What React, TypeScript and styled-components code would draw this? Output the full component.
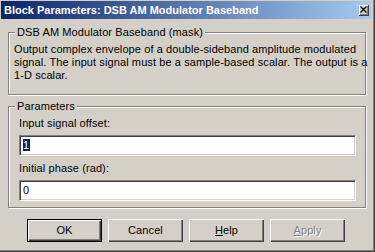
import React from "react";
import styled, { createGlobalStyle } from "styled-components";

const Global = createGlobalStyle`
  html, body { margin: 0; padding: 0; background: #d4d0c8; }
  body { font-family: "Liberation Sans", Arial, sans-serif; font-size: 11px; }
  * { box-sizing: border-box; }
`;

const Window = styled.div`
  width: 375px;
  height: 252px;
  background: #d4d0c8;
  padding: 1px 3px 0 1px;
  border-right: 1px solid #404040;
  border-bottom: 1px solid #404040;
  box-shadow: inset -1px -1px 0 #808080;
  display: flex;
  flex-direction: column;
  color: #000;
  font-family: "Liberation Sans", Arial, sans-serif;
  font-size: 11px;
  letter-spacing: 0.1px;
  line-height: 13px;
`;

const TitleBar = styled.div`
  height: 18px;
  display: flex;
  align-items: center;
  justify-content: space-between;
  padding: 0 2px 0 3px;
  background: linear-gradient(to right, #0a246a, #a6caf0);
`;

const TitleText = styled.span`
  color: #fff;
  font-weight: bold;
  font-size: 11px;
  letter-spacing: 0;
  white-space: nowrap;
`;

const CloseButton = styled.div`
  width: 10px;
  height: 11px;
  background: #d4d0c8;
  border-right: 1px solid #404040;
  border-bottom: 1px solid #404040;
  box-shadow: inset 1px 1px 0 #fff, inset -1px -1px 0 #808080;
  display: flex;
  align-items: center;
  justify-content: center;
`;

const Body = styled.div`
  flex: 1;
  display: flex;
  flex-direction: column;
  padding: 13px 5px 0 7px;
`;

const Group = styled.div<{ $gap?: number; $padLeft: number }>`
  margin-top: ${(p) => p.$gap ?? 0}px;
  border: 1px solid #808080;
  box-shadow: inset 1px 1px 0 #fff, 1px 1px 0 #fff;
  padding: 0 9px 6px ${(p) => p.$padLeft}px;
  display: flex;
  flex-direction: column;
`;

const Legend = styled.div<{ $shift: number }>`
  align-self: flex-start;
  margin: -7px 0 4px ${(p) => p.$shift}px;
  padding: 0 2px;
  background: #d4d0c8;
  white-space: nowrap;
`;

const Description = styled.div`
  margin: 0 0 6px 0;
`;

const Line = styled.div`
  white-space: nowrap;
`;

const Label = styled.div`
  margin-bottom: 5px;
  white-space: nowrap;
`;

const Field = styled.div<{ $last?: boolean }>`
  height: 21px;
  background: #fff;
  border-top: 1px solid #808080;
  border-left: 1px solid #808080;
  border-right: 1px solid #fff;
  border-bottom: 1px solid #fff;
  box-shadow: inset 1px 1px 0 #404040, inset -1px -1px 0 #d4d0c8;
  padding: 3px 3px 2px;
  margin-bottom: ${(p) => (p.$last ? 0 : 6)}px;
`;

const Selected = styled.span`
  background: #0a246a;
  color: #fff;
  padding: 0 1px 0 0;
`;

const ButtonRow = styled.div`
  display: flex;
  justify-content: center;
  gap: 6px;
  margin-top: 11px;
  padding-right: 2px;
`;

const Button = styled.div<{ $default?: boolean; $disabled?: boolean }>`
  width: 75px;
  height: 23px;
  display: flex;
  align-items: center;
  justify-content: center;
  background: #d4d0c8;
  border: ${(p) => (p.$default ? "1px solid #000" : "none")};
  box-shadow: inset 1px 1px 0 #fff, inset -1px -1px 0 #404040,
    inset -2px -2px 0 #808080;
  color: ${(p) => (p.$disabled ? "#808080" : "#000")};
  text-shadow: ${(p) => (p.$disabled ? "1px 1px 0 #fff" : "none")};
`;

const Key = styled.span`
  text-decoration: underline;
`;

export default function App() {
  return (
    <>
      <Global />
      <Window>
        <TitleBar>
          <TitleText>Block Parameters: DSB AM Modulator Baseband</TitleText>
          <CloseButton>
            <svg width="7" height="7" viewBox="0 0 7 7">
              <path d="M0.5 0.5 L6.5 6.5 M6.5 0.5 L0.5 6.5" stroke="#000" strokeWidth="1.4" />
            </svg>
          </CloseButton>
        </TitleBar>
        <Body>
          <Group $padLeft={5}>
            <Legend $shift={1}>DSB AM Modulator Baseband (mask)</Legend>
            <Description>
              <Line>Output complex envelope of a double-sideband amplitude modulated</Line>
              <Line>signal. The input signal must be a sample-based scalar. The output is a</Line>
              <Line>1-D scalar.</Line>
            </Description>
          </Group>
          <Group $gap={11} $padLeft={10}>
            <Legend $shift={-4}>Parameters</Legend>
            <Label>Input signal offset:</Label>
            <Field>
              <Selected>1</Selected>
            </Field>
            <Label>Initial phase (rad):</Label>
            <Field $last>0</Field>
          </Group>
          <ButtonRow>
            <Button $default>OK</Button>
            <Button>Cancel</Button>
            <Button>
              <span>
                <Key>H</Key>elp
              </span>
            </Button>
            <Button $disabled>
              <span>
                <Key>A</Key>pply
              </span>
            </Button>
          </ButtonRow>
        </Body>
      </Window>
    </>
  );
}
